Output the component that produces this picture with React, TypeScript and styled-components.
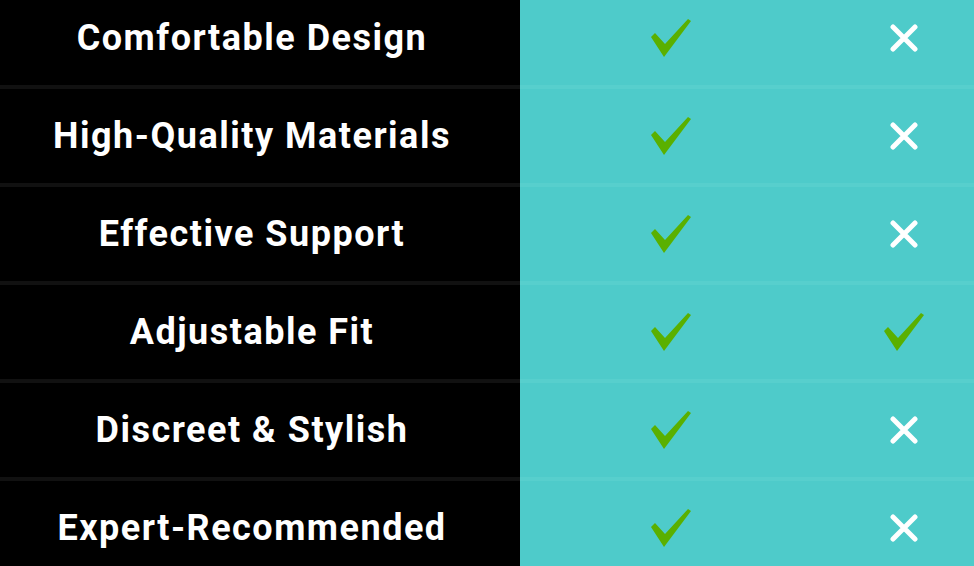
import React from 'react';
import styled, { createGlobalStyle } from 'styled-components';

const Global = createGlobalStyle`
  html, body {
    margin: 0;
    padding: 0;
    background: #4ecbca;
    overflow: hidden;
  }
  body {
    font-family: Roboto, "Liberation Sans", sans-serif;
  }
`;

const Table = styled.div`
  display: grid;
  grid-template-columns: 520px 302px 164px;
  margin-top: -9px;
  width: 986px;
`;

const Row = styled.div`
  display: contents;
`;

const Label = styled.div<{ $last?: boolean }>`
  height: 94px;
  padding-right: 16px;
  background: #000;
  border-bottom: 4px solid ${(p) => (p.$last ? '#000' : '#111')};
  display: flex;
  align-items: center;
  justify-content: center;
  color: #fff;
  font-size: 36px;
  font-weight: 700;
  letter-spacing: 1.5px;
`;

const Cell = styled.div<{ $last?: boolean }>`
  height: 94px;
  background: #4ecbca;
  border-bottom: 4px solid ${(p) => (p.$last ? '#4ecbca' : '#57cfcd')};
  display: flex;
  align-items: center;
  justify-content: center;
`;

function Check() {
  return (
    <svg width="42" height="42" viewBox="0 0 42 42">
      <polygon points="1,20 5,16 15,27 38,2 41,4 14,40" fill="#5ab000" />
    </svg>
  );
}

function Cross() {
  return (
    <svg width="28" height="28" viewBox="0 0 28 28">
      <path d="M3 3 L25 25 M25 3 L3 25" stroke="#fff" strokeWidth="5" strokeLinecap="round" />
    </svg>
  );
}

const rows: [string, boolean][] = [
  ['Comfortable Design', false],
  ['High-Quality Materials', false],
  ['Effective Support', false],
  ['Adjustable Fit', true],
  ['Discreet & Stylish', false],
  ['Expert-Recommended', false],
];

export default function App() {
  return (
    <>
      <Global />
      <Table>
        {rows.map(([label, other], i) => {
          const last = i === rows.length - 1;
          return (
            <Row key={label}>
              <Label $last={last}>{label}</Label>
              <Cell $last={last}>
                <Check />
              </Cell>
              <Cell $last={last}>{other ? <Check /> : <Cross />}</Cell>
            </Row>
          );
        })}
      </Table>
    </>
  );
}
